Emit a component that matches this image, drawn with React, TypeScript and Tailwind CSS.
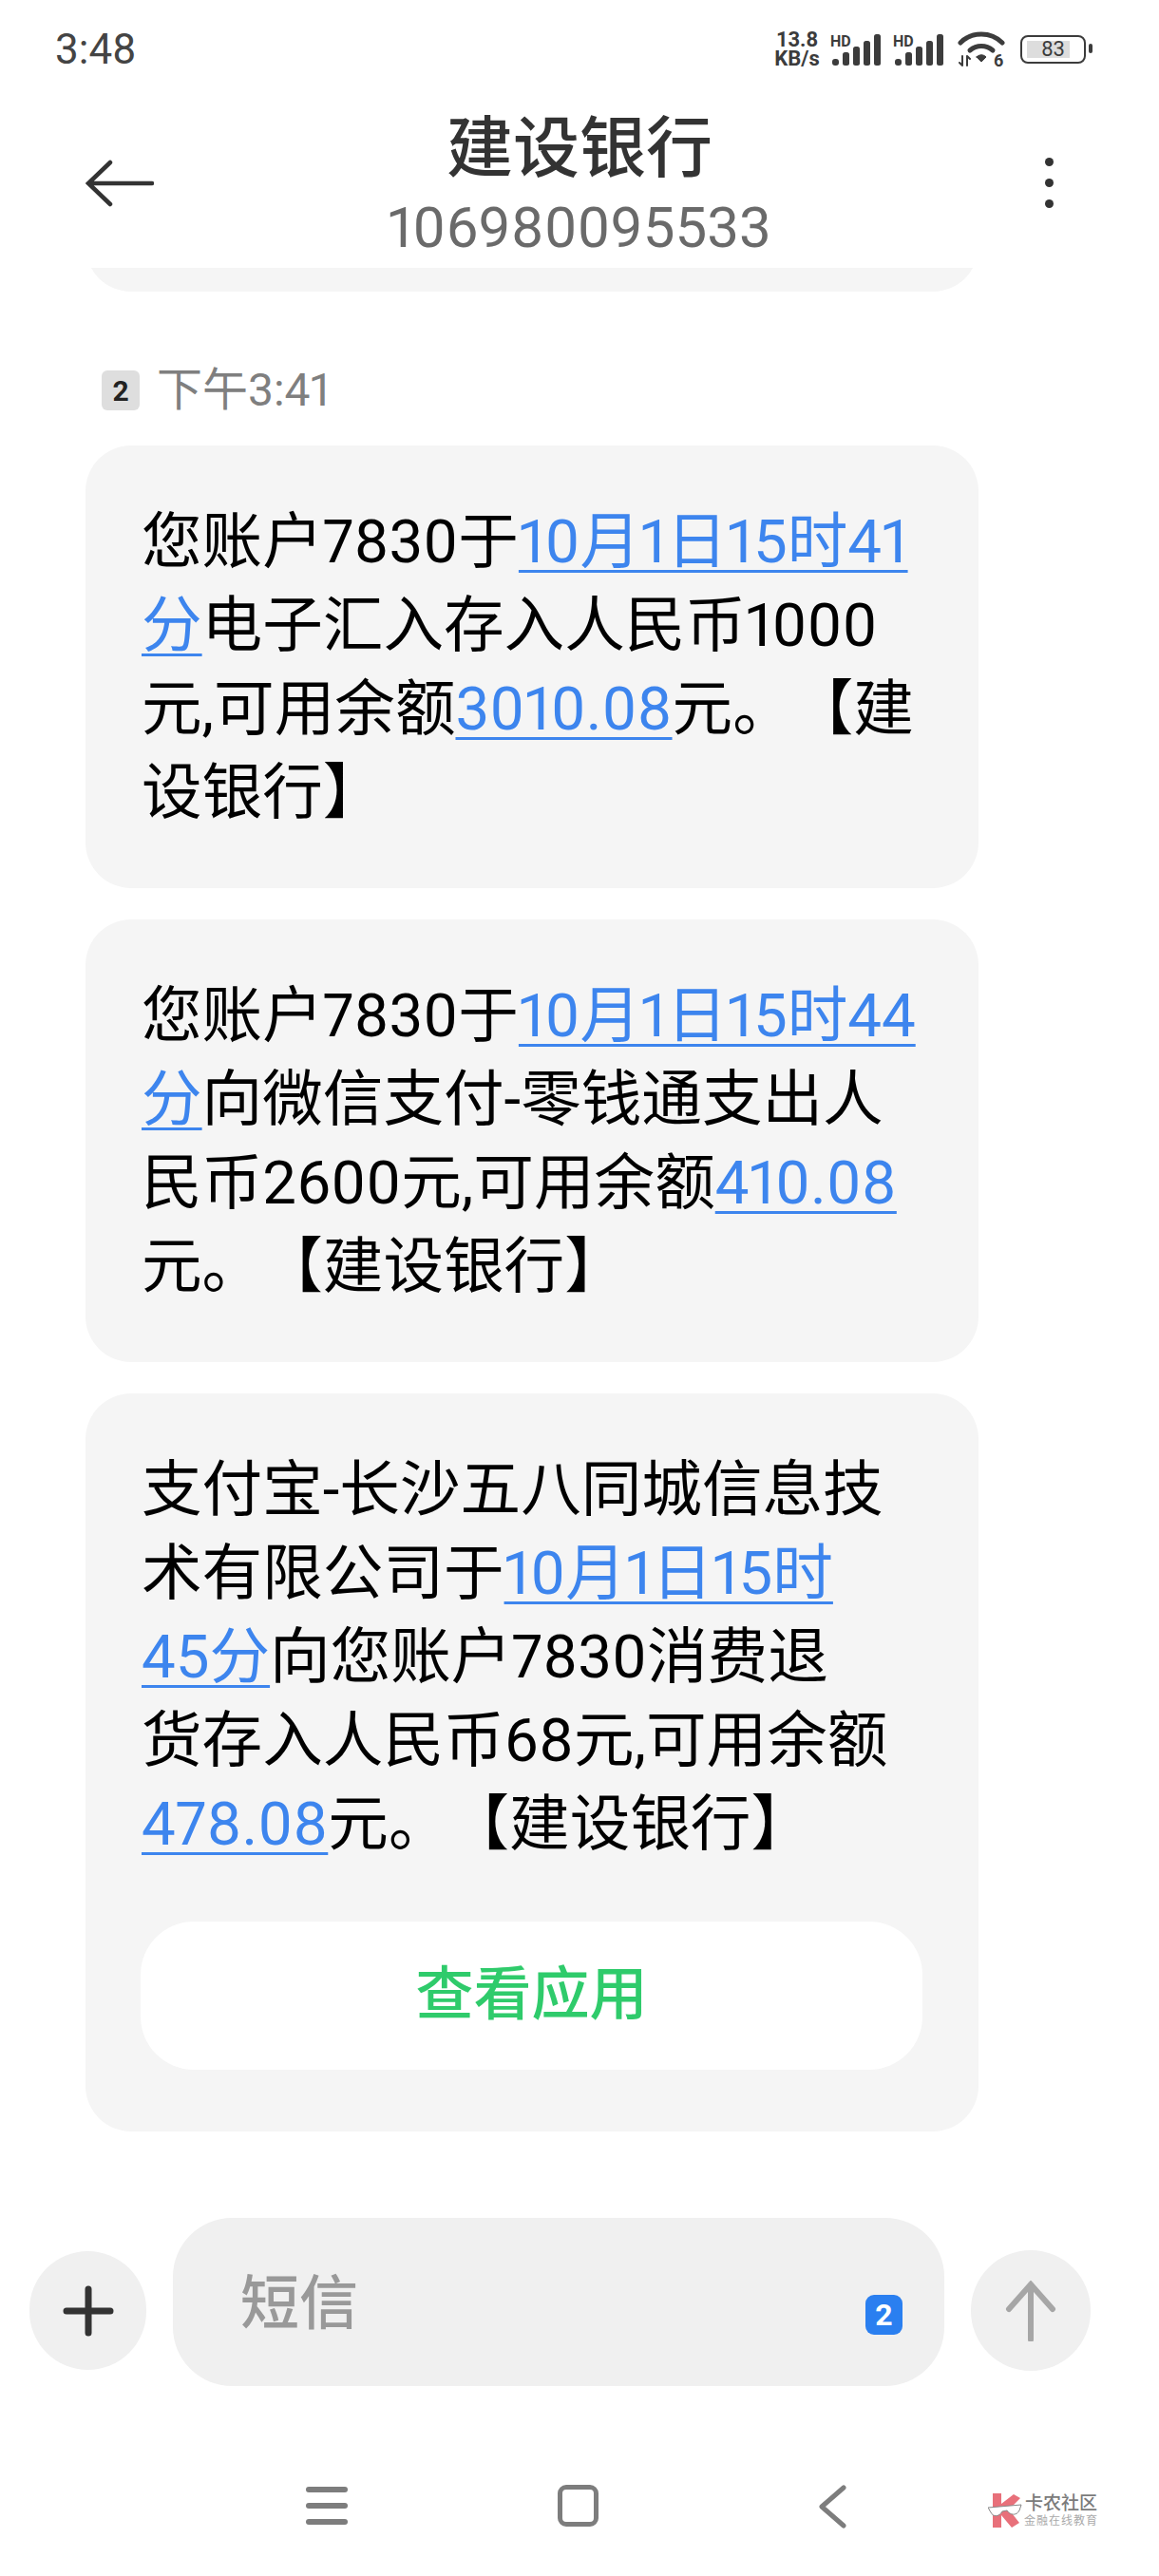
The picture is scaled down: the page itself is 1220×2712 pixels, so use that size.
import React from 'react';

const font = { fontFamily: 'Roboto, "Noto Sans CJK SC", sans-serif' };

function Link({ children }: { children: React.ReactNode }) {
  return <span className="text-[#3d85ee] underline decoration-[3px] underline-offset-[8px] [text-decoration-skip-ink:none]">{children}</span>;
}

function Signal() {
  return (
    <div className="relative w-[51px] h-[33px]">
      <svg width="51" height="33" viewBox="0 0 51 33" fill="#3c3c3c" className="block">
        <rect x="0" y="26" width="7" height="7" rx="3" />
        <rect x="11" y="19" width="7" height="14" rx="2.5" />
        <rect x="22" y="13" width="7" height="20" rx="2.5" />
        <rect x="33" y="7" width="7" height="26" rx="2.5" />
        <rect x="44" y="0" width="7" height="33" rx="2.5" />
      </svg>
      <span className="absolute top-[1px] -left-[2px] text-[16px] font-bold leading-[14px]">HD</span>
    </div>
  );
}

function StatusBar() {
  return (
    <div className="h-[100px] flex items-center justify-between pl-[58px] pr-[77px] pt-[4px]">
      <span className="text-[44px] leading-[50px] text-[#444] proportional-nums">3:48</span>
      <div className="flex items-center text-[#3c3c3c]">
        <div className="text-[22px] leading-[20px] font-bold text-center w-[50px] mr-[12px] whitespace-nowrap">13.8<br />KB/s</div>
        <div className="mr-[15px]"><Signal /></div>
        <div className="mr-[15px]"><Signal /></div>
        <svg width="50" height="38" viewBox="0 0 50 38" className="mr-[16px] overflow-visible" fill="none" stroke="#3c3c3c" strokeLinecap="round">
          <path d="M3 12 C15 0 35 0 47 12" strokeWidth="5" />
          <path d="M13 20 C20 14 30 14 37 20" strokeWidth="5" />
          <path d="M20 27 L25 32 L30 27 C27 24 23 24 20 27Z" fill="#3c3c3c" strokeWidth="1" />
          <path d="M5 26 V36 M2 33 L5 36 M10 26 V36 M10 26 L13 29" strokeWidth="2" />
          <text x="38" y="37" fontSize="18" fontWeight="700" fill="#3c3c3c" stroke="none">6</text>
        </svg>
        <div className="relative w-[69px] h-[30px] rounded-[8px] border-[2.5px] border-[#3c3c3c] flex items-center">
          <div className="absolute left-[5px] top-[4px] bottom-[4px] w-[45px] bg-[#ddd]" />
          <span className="relative w-full text-center text-[22px] leading-none text-[#3c3c3c]">83</span>
          <div className="absolute -right-[9px] top-[7px] w-[4px] h-[10px] bg-[#3c3c3c] rounded-sm" />
        </div>
      </div>
    </div>
  );
}

function Header() {
  return (
    <div className="relative h-[182px] flex flex-col items-center">
      <div className="text-[70px] leading-[80px] font-medium text-[#333] mt-[17px]">建设银行</div>
      <div className="text-[60px] leading-[64px] text-[#6a6a6a] mt-[11px] proportional-nums">106980095533</div>
      <svg className="absolute left-[90px] top-[68px]" width="72" height="50" viewBox="0 0 72 50" fill="none" stroke="#333" strokeWidth="4.5" strokeLinecap="round">
        <path d="M3 25 H70 M26 3 L3 25 L26 47" />
      </svg>
      <div className="absolute left-[1100px] top-[66px] flex flex-col gap-[13px]">
        <span className="w-[9px] h-[9px] rounded-full bg-[#333]" />
        <span className="w-[9px] h-[9px] rounded-full bg-[#333]" />
        <span className="w-[9px] h-[9px] rounded-full bg-[#333]" />
      </div>
    </div>
  );
}

function Bubble({ children, extra }: { children: React.ReactNode; extra?: React.ReactNode }) {
  return (
    <div className="w-[940px] ml-[90px] bg-[#f5f5f5] rounded-[48px] pl-[59px] pr-[58px] pt-[58px] pb-[56px] mb-[33px]">
      <div className="text-[63.6px] leading-[88px] text-black whitespace-nowrap proportional-nums [text-spacing-trim:space-all]">{children}</div>
      {extra}
    </div>
  );
}

function Composer() {
  return (
    <div className="flex items-end pl-[31px] mt-[58px]">
      <div className="w-[123px] h-[125px] mb-[17px] rounded-full bg-[#f0f0f0] flex items-center justify-center">
        <svg width="54" height="54" viewBox="0 0 54 54" fill="none" stroke="#333" strokeWidth="7" strokeLinecap="round">
          <path d="M27 4 V50 M4 27 H50" />
        </svg>
      </div>
      <div className="relative w-[812px] h-[177px] ml-[28px] rounded-[62px] bg-[#f0f0f0] pl-[71px] pt-[47px]">
        <span className="text-[62px] leading-[88px] font-medium text-[#999]">短信</span>
        <div className="absolute left-[729px] top-[81px] w-[39px] h-[42px] rounded-[9px] bg-[#2a7ff0] flex items-center justify-center text-[32px] font-bold text-white leading-none">2</div>
      </div>
      <div className="w-[126px] h-[127px] mb-[16px] ml-[28px] rounded-full bg-[#f0f0f0] flex items-center justify-center">
        <svg width="56" height="64" viewBox="0 0 56 64" fill="none" stroke="#a6a6a6" strokeWidth="6" strokeLinecap="round">
          <path d="M28 4 V62 M5 30 L28 4 L51 30" />
        </svg>
      </div>
    </div>
  );
}

function NavBar() {
  return (
    <div className="relative flex-1">
      <div className="absolute left-[322px] top-[106px] w-[44px] flex flex-col gap-[11px]">
        <span className="h-[6px] rounded-full bg-[#7d7d7d]" />
        <span className="h-[6px] rounded-full bg-[#7d7d7d]" />
        <span className="h-[6px] rounded-full bg-[#7d7d7d]" />
      </div>
      <div className="absolute left-[587px] top-[104px] w-[43px] h-[44px] rounded-[9px] border-[5px] border-[#7d7d7d]" />
      <svg className="absolute left-[861px] top-[104px]" width="30" height="46" viewBox="0 0 30 46" fill="none" stroke="#7d7d7d" strokeWidth="5" strokeLinecap="round" strokeLinejoin="round">
        <path d="M27 3 L4 23 L27 43" />
      </svg>
      <div className="absolute left-[1040px] top-[113px] flex items-center">
        <svg width="36" height="36" viewBox="0 0 36 36">
          <path d="M5 0 H14 V11 L27 1 L34 5 L22 17 L33 31 L25 36 L14 23 V36 H5Z" fill="#e8707a" />
          <path d="M0 15 L35 12 L33 18 C30 24 23 23 20 18 L15 19 C12 25 5 25 3 20Z" fill="#fff" stroke="#888" strokeWidth="1" />
        </svg>
        <div className="ml-[2px] text-center">
          <div className="text-[19px] leading-[22px] font-medium text-[#7b7b7b] whitespace-nowrap">卡农社区</div>
          <div className="text-[12px] leading-[14px] text-[#aaa] whitespace-nowrap tracking-[1px]">金融在线教育</div>
        </div>
      </div>
    </div>
  );
}

export default function App() {
  return (
    <div lang="zh-CN" style={font} className="w-[1220px] h-[2712px] bg-white flex flex-col overflow-hidden">
      <StatusBar />
      <Header />
      <div className="w-[940px] h-[25px] ml-[90px] overflow-hidden">
        <div className="h-[96px] -mt-[71px] bg-[#f5f5f5] rounded-[48px]" />
      </div>
      <div className="flex items-center h-[60px] mt-[74px] mb-[28px] ml-[107px]">
        <span className="w-[40px] h-[42px] rounded-[6px] bg-[#dedede] flex items-center justify-center text-[30px] font-bold text-[#222]">2</span>
        <span className="ml-[18px] text-[48px] text-[#7f7f7f] proportional-nums">下午3:41</span>
      </div>
      <Bubble>
        您账户7830于<Link>10月1日15时41</Link><br />
        <Link>分</Link>电子汇入存入人民币1000<br />
        元,可用余额<Link>3010.08</Link>元。【建<br />
        设银行】
      </Bubble>
      <Bubble>
        您账户7830于<Link>10月1日15时44</Link><br />
        <Link>分</Link>向微信支付-零钱通支出人<br />
        民币2600元,可用余额<Link>410.08</Link><br />
        元。【建设银行】
      </Bubble>
      <Bubble
        extra={
          <div className="w-[823px] h-[156px] -ml-[1px] mt-[58px] mb-[9px] rounded-[56px] bg-white flex items-center justify-center text-[61px] font-medium text-[#2fcb6b]">
            查看应用
          </div>
        }
      >
        支付宝-长沙五八同城信息技<br />
        术有限公司于<Link>10月1日15时</Link><br />
        <Link>45分</Link>向您账户7830消费退<br />
        货存入人民币68元,可用余额<br />
        <Link>478.08</Link>元。【建设银行】
      </Bubble>
      <Composer />
      <NavBar />
    </div>
  );
}
